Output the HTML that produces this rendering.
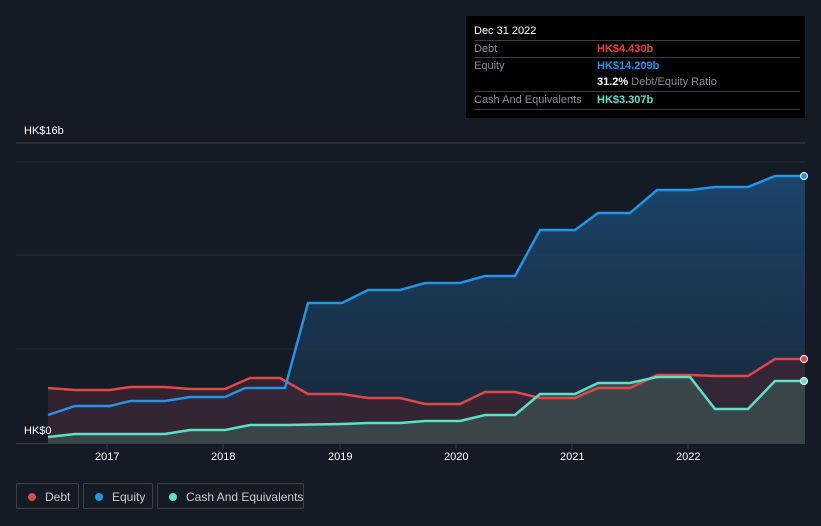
<!DOCTYPE html><html><head><style>
body{margin:0;width:821px;height:526px;background:#151b25;font-family:"Liberation Sans",sans-serif;overflow:hidden;position:relative}
.tt{position:absolute;left:466px;top:16px;width:339px;height:102px;background:#000;font-size:11px}
.r{position:absolute;left:8px;width:326px;border-top:1px solid #3a3d42;height:17px;line-height:17px;color:#8a8d93}
.v{position:absolute;left:123px;font-weight:bold}
.lg{position:absolute;top:483px;height:26px;border:1px solid #3b404a;border-radius:2px;color:#c9ccd1;font-size:12px;line-height:26px;box-sizing:border-box;white-space:nowrap}
.lg i{position:absolute;left:11px;top:9px;width:8px;height:8px;border-radius:50%}
.lg span{position:absolute;left:28px}
.ax{position:absolute;color:#fff;font-size:11px}
</style></head><body>
<svg width="821" height="526" style="position:absolute;left:0;top:0">
<defs><linearGradient id="g" x1="0" y1="0" x2="0" y2="1"><stop offset="0" stop-color="#1b4a72" stop-opacity=".9"/><stop offset="1" stop-color="#1b3550" stop-opacity=".5"/></linearGradient></defs>
<line x1="16" y1="143" x2="805" y2="143" stroke="#3a3f48"/>
<line x1="16" y1="162" x2="805" y2="162" stroke="#252b35"/>
<line x1="16" y1="255" x2="805" y2="255" stroke="#252b35"/>
<line x1="16" y1="349" x2="805" y2="349" stroke="#252b35"/>
<polygon fill="url(#g)" points="48,443 48,415 75,406 110,406 130,401 165,401 190,397 225,397 245,388 285,388 308,303 342,303 368,290 400,290 425,283 460,283 485,276 515,276 540,230 575,230 598,213 630,213 657,190 690,190 715,187 748,187 775,176 805,176 805,443"/>
<polygon fill="#3e2432" fill-opacity=".75" points="48,443 48,388 75,390 110,390 130,387 165,387 190,389 225,389 250,378 280,378 308,394 342,394 368,398 400,398 425,404 460,404 485,392 515,392 540,398 575,398 598,388 630,388 657,375 690,375 715,376 748,376 775,359 805,359 805,443"/>
<polygon fill="#3d5254" fill-opacity=".7" points="48,443 48,437 75,434 130,434 165,434 190,430 225,430 250,425 285,425 342,424 368,423 400,423 425,421 460,421 485,415 515,415 540,394 575,394 598,383 630,383 657,377 690,377 715,409 748,409 775,381 805,381 805,443"/>
<polyline fill="none" stroke="#e04848" stroke-width="2.5" points="48,388 75,390 110,390 130,387 165,387 190,389 225,389 250,378 280,378 308,394 342,394 368,398 400,398 425,404 460,404 485,392 515,392 540,398 575,398 598,388 630,388 657,375 690,375 715,376 748,376 775,359 805,359"/>
<polyline fill="none" stroke="#2394e6" stroke-width="2.5" points="48,415 75,406 110,406 130,401 165,401 190,397 225,397 245,388 285,388 308,303 342,303 368,290 400,290 425,283 460,283 485,276 515,276 540,230 575,230 598,213 630,213 657,190 690,190 715,187 748,187 775,176 805,176"/>
<polyline fill="none" stroke="#5de0c8" stroke-width="2.5" points="48,437 75,434 130,434 165,434 190,430 225,430 250,425 285,425 342,424 368,423 400,423 425,421 460,421 485,415 515,415 540,394 575,394 598,383 630,383 657,377 690,377 715,409 748,409 775,381 805,381"/>
<circle cx="804" cy="176" r="3.5" fill="#2394e6" stroke="#fff"/>
<circle cx="804" cy="359" r="3.5" fill="#e04848" stroke="#fff"/>
<circle cx="804" cy="381" r="3.5" fill="#5de0c8" stroke="#fff"/>
<line x1="16" y1="443.5" x2="805" y2="443.5" stroke="#3a3f48"/>
<g stroke="#3a3f48"><line x1="107" y1="444" x2="107" y2="449"/><line x1="223" y1="444" x2="223" y2="449"/><line x1="340" y1="444" x2="340" y2="449"/><line x1="456" y1="444" x2="456" y2="449"/><line x1="572" y1="444" x2="572" y2="449"/><line x1="688" y1="444" x2="688" y2="449"/></g>
</svg>
<div class="ax" style="left:24px;top:125px">HK$16b</div>
<div class="ax" style="left:24px;top:425px">HK$0</div>
<div class="ax" style="left:95px;top:451px">2017</div>
<div class="ax" style="left:211px;top:451px">2018</div>
<div class="ax" style="left:328px;top:451px">2019</div>
<div class="ax" style="left:444px;top:451px">2020</div>
<div class="ax" style="left:560px;top:451px">2021</div>
<div class="ax" style="left:676px;top:451px">2022</div>
<div class="tt">
<div style="position:absolute;left:8px;top:9px;color:#fff">Dec 31 2022</div>
<div class="r" style="top:24px">Debt<span class="v" style="color:#e8413f">HK$4.430b</span></div>
<div class="r" style="top:41px">Equity<span class="v" style="color:#2394e6">HK$14.209b</span></div>
<div class="r" style="top:58px;border-top:none"><span class="v" style="color:#fff">31.2% <span style="color:#8a8d93;font-weight:normal">Debt/Equity Ratio</span></span></div>
<div class="r" style="top:75px">Cash And Equivalents<span class="v" style="color:#5de0c8">HK$3.307b</span></div>
<div class="r" style="top:93px;height:0"></div>
</div>
<div class="lg" style="left:16px;width:63px"><i style="background:#e04848"></i><span>Debt</span></div>
<div class="lg" style="left:83px;width:70px"><i style="background:#2394e6"></i><span>Equity</span></div>
<div class="lg" style="left:157px;width:147px"><i style="background:#5de0c8"></i><span>Cash And Equivalents</span></div>
</body></html>
